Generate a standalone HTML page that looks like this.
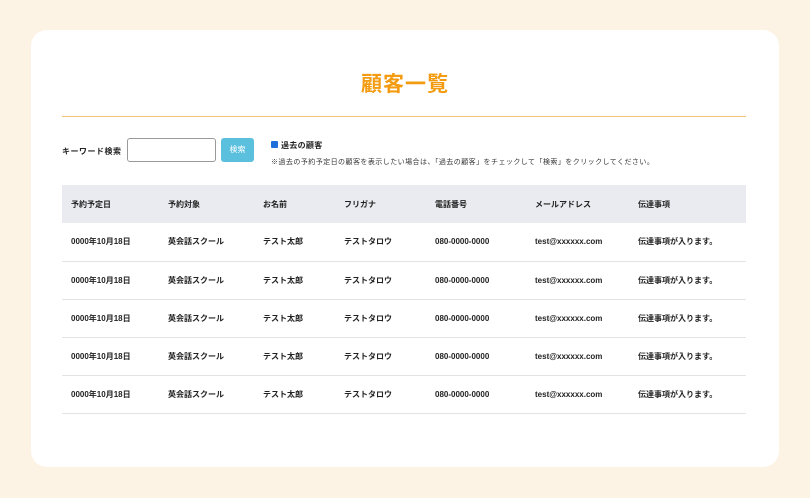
<!DOCTYPE html>
<html><head><meta charset="utf-8"><style>
*{margin:0;padding:0;box-sizing:border-box}
body{width:810px;height:498px;background:#fdf3e4;font-family:"Liberation Sans","Noto Sans CJK JP",sans-serif;color:#222;position:relative;overflow:hidden}
.card{position:absolute;left:31px;top:30px;width:748px;height:437px;background:#fff;border-radius:16px}
h1{position:absolute;left:0;right:0;top:68px;text-align:center;font-size:21px;color:#f39c12;font-weight:bold;letter-spacing:1px}
.line{position:absolute;left:62px;width:684px;top:116px;height:1px;background:#f6c27a}
.lbl{position:absolute;left:62px;top:146px;font-size:8px;font-weight:bold;letter-spacing:0.5px}
.inp{position:absolute;left:127px;top:138px;width:89px;height:24px;border:1px solid #999;border-radius:3px}
.btn{position:absolute;left:221px;top:138px;width:33px;height:24px;background:#5bc0de;border-radius:3px;color:#fff;font-size:8px;text-align:center;line-height:24px}
.cb{position:absolute;left:271px;top:141px;width:7px;height:7px;background:#1e6fd9;border-radius:1px}
.cbl{position:absolute;left:281px;top:140px;font-size:8px;font-weight:bold;letter-spacing:0.3px}
.note{position:absolute;left:271px;top:157px;font-size:7px;color:#333;letter-spacing:0.45px}
table{position:absolute;left:62px;top:185px;width:684px;border-collapse:collapse;font-size:8px;font-weight:bold}
th{background:#e9ebf0;height:38px;text-align:left;padding-left:9px}
td{height:38px;border-bottom:1px solid #e3e3e3;padding-left:9px}
tr.r td{height:38px}
</style></head><body>
<div class="card"></div>
<h1>顧客一覧</h1>
<div class="line"></div>
<div class="lbl">キーワード検索</div>
<div class="inp"></div>
<div class="btn">検索</div>
<div class="cb"></div><div class="cbl">過去の顧客</div>
<div class="note">※過去の予約予定日の顧客を表示したい場合は、「過去の顧客」をチェックして「検索」をクリックしてください。</div>
<table>
<tr><th style="width:97px">予約予定日</th><th style="width:95px">予約対象</th><th style="width:81px">お名前</th><th style="width:91px">フリガナ</th><th style="width:100px">電話番号</th><th style="width:103px">メールアドレス</th><th>伝達事項</th></tr>
<tr><td style="height:37px">0000年10月18日</td><td>英会話スクール</td><td>テスト太郎</td><td>テストタロウ</td><td>080-0000-0000</td><td>test@xxxxxx.com</td><td>伝達事項が入ります。</td></tr>
<tr><td style="height:38px">0000年10月18日</td><td>英会話スクール</td><td>テスト太郎</td><td>テストタロウ</td><td>080-0000-0000</td><td>test@xxxxxx.com</td><td>伝達事項が入ります。</td></tr>
<tr><td style="height:38px">0000年10月18日</td><td>英会話スクール</td><td>テスト太郎</td><td>テストタロウ</td><td>080-0000-0000</td><td>test@xxxxxx.com</td><td>伝達事項が入ります。</td></tr>
<tr><td style="height:38px">0000年10月18日</td><td>英会話スクール</td><td>テスト太郎</td><td>テストタロウ</td><td>080-0000-0000</td><td>test@xxxxxx.com</td><td>伝達事項が入ります。</td></tr>
<tr><td style="height:38px">0000年10月18日</td><td>英会話スクール</td><td>テスト太郎</td><td>テストタロウ</td><td>080-0000-0000</td><td>test@xxxxxx.com</td><td>伝達事項が入ります。</td></tr>
</table>
</body></html>
